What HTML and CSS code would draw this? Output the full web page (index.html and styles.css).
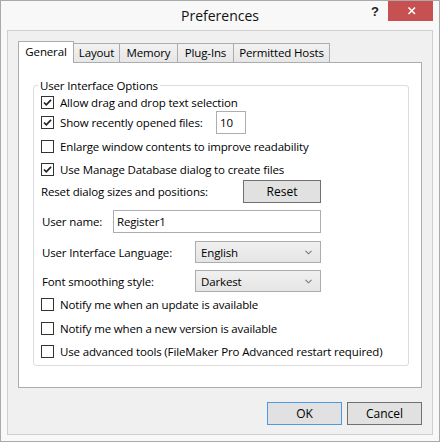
FILE: index.html
```
<!DOCTYPE html>
<html lang="en">
<head>
    <meta charset="UTF-8">
    <title>Preferences</title>
    <link rel="stylesheet" href="styles.css">
</head>
<body>
    <div class="window">
        <div class="titlebar">
            <span></span>
            <div class="title">Preferences</div>
            <div class="caption-btns">
                <span class="help">?</span>
                <span class="close">
                    <svg width="45" height="20" viewBox="0 0 45 20">
                        <path d="M20.5 6.5 L27 13 M27 6.5 L20.5 13" stroke="#fff" stroke-width="1.6" fill="none"/>
                    </svg>
                </span>
            </div>
        </div>

        <div class="client">
            <div class="tabs">
                <div class="tab active tab-general">General</div>
                <div class="tab tab-layout">Layout</div>
                <div class="tab tab-memory">Memory</div>
                <div class="tab tab-plugins">Plug-Ins</div>
                <div class="tab tab-hosts">Permitted Hosts</div>
            </div>

            <div class="panel">
                <fieldset class="group">
                    <legend>User Interface Options</legend>

                    <div class="row r1">
                        <span class="check on"></span>
                        <span>Allow drag and drop text selection</span>
                    </div>
                    <div class="row r2">
                        <span class="check on"></span>
                        <span class="label-files">Show recently opened files:</span>
                        <span class="textbox small">10</span>
                    </div>
                    <div class="row r3">
                        <span class="check"></span>
                        <span>Enlarge window contents to improve readability</span>
                    </div>
                    <div class="row r4">
                        <span class="check on"></span>
                        <span>Use Manage Database dialog to create files</span>
                    </div>
                    <div class="row r5">
                        <span class="label-reset">Reset dialog sizes and positions:</span>
                        <button class="btn reset">Reset</button>
                    </div>
                    <div class="row r6">
                        <span class="label-user">User name:</span>
                        <span class="textbox wide">Register1</span>
                    </div>
                    <div class="row r7">
                        <span class="label-select">User Interface Language:</span>
                        <span class="select">English
                            <svg width="7" height="5" viewBox="0 0 7 5"><path d="M0.5 0.8 L3.5 3.8 L6.5 0.8" stroke="#777" stroke-width="1.1" fill="none"/></svg>
                        </span>
                    </div>
                    <div class="row r8">
                        <span class="label-select">Font smoothing style:</span>
                        <span class="select">Darkest
                            <svg width="7" height="5" viewBox="0 0 7 5"><path d="M0.5 0.8 L3.5 3.8 L6.5 0.8" stroke="#777" stroke-width="1.1" fill="none"/></svg>
                        </span>
                    </div>
                    <div class="row r9">
                        <span class="check"></span>
                        <span>Notify me when an update is available</span>
                    </div>
                    <div class="row r10">
                        <span class="check"></span>
                        <span>Notify me when a new version is available</span>
                    </div>
                    <div class="row r11">
                        <span class="check"></span>
                        <span>Use advanced tools (FileMaker Pro Advanced restart required)</span>
                    </div>
                </fieldset>
            </div>

            <div class="buttons">
                <button class="btn default">OK</button>
                <button class="btn">Cancel</button>
            </div>
        </div>
    </div>
</body>
</html>
```

FILE: styles.css
```
* {
    margin: 0;
    padding: 0;
    box-sizing: border-box;
}

body {
    font-family: 'Open Sans', 'Noto Sans', Arial, sans-serif;
    font-size: 11.5px;
    letter-spacing: -0.15px;
    color: #000;
    background: #fff;
}

.window {
    width: 440px;
    height: 442px;
    border: 1px solid #a9a9a9;
    background: #f8f8f8;
    display: flex;
    flex-direction: column;
}

/* title bar */
.titlebar {
    height: 29px;
    display: grid;
    grid-template-columns: 1fr auto 1fr;
}

.title {
    font-size: 14px;
    letter-spacing: 0;
    line-height: 29px;
    color: #111;
}

.caption-btns {
    justify-self: end;
    display: flex;
    align-items: flex-start;
    margin-right: 6px;
}

.help {
    width: 26px;
    height: 20px;
    display: flex;
    align-items: center;
    justify-content: center;
    font-family: 'Liberation Sans', Arial, sans-serif;
    font-weight: bold;
    font-size: 13px;
    color: #222;
}

.close {
    width: 45px;
    height: 20px;
    background: #c75050;
    display: block;
}

.close svg {
    display: block;
}

/* client area */
.client {
    flex: 1;
    margin: 0 6px 6px 6px;
    border: 1px solid #cfcfcf;
    background: #f0f0f0;
    padding: 10px 10px 9px 10px;
}

.tabs {
    display: flex;
    align-items: flex-end;
    height: 21px;
}

.tab {
    height: 19px;
    border: 1px solid #acacac;
    border-bottom: none;
    background: linear-gradient(#f2f2f2, #e6e6e6);
    text-align: center;
    line-height: 18px;
    margin-left: -1px;
}

.tab.active {
    height: 22px;
    margin-left: 0;
    margin-bottom: -1px;
    background: #fff;
    line-height: 20px;
    position: relative;
    z-index: 1;
}

.tab-general { width: 56px; }
.tab-layout { width: 47px; }
.tab-memory { width: 59px; }
.tab-plugins { width: 57px; }
.tab-hosts { width: 97px; }

.panel {
    height: 326px;
    border: 1px solid #acacac;
    background: #fff;
    padding-top: 15px;
}

.group {
    margin: 0 12px 0 14px;
    border: 1px solid #dcdcdc;
    border-radius: 3px;
    padding: 0 0 2px 0;
}

.group legend {
    margin-left: 4px;
    padding: 0 2px;
    line-height: 15px;
}

.row {
    display: flex;
    align-items: center;
    white-space: nowrap;
    padding-left: 7px;
}

.r1 { height: 18px; }
.r2 { height: 23px; }
.r3 { height: 24px; }
.r4 { height: 22px; }
.r5 { height: 23px; }
.r6 { height: 23px; margin-top: 7px; }
.r7 { height: 22px; margin-top: 8px; }
.r8 { height: 22px; margin-top: 7px; }
.r9 { height: 24px; }
.r10 { height: 24px; }
.r11 { height: 23px; }

.check {
    width: 13px;
    height: 13px;
    border: 1px solid #333;
    background: #fff;
    margin-right: 6px;
    flex: none;
}

.check.on {
    background: #fff url("data:image/svg+xml;utf8,<svg xmlns='http://www.w3.org/2000/svg' width='11' height='11' viewBox='0 0 11 11'><path d='M2 5.5 L4.3 7.8 L9 2.8' stroke='%23222' stroke-width='1.7' fill='none'/></svg>") no-repeat center;
}

.label-files {
    width: 156px;
    flex: none;
}

.label-reset {
    width: 202px;
    flex: none;
}

.label-user {
    width: 72px;
    padding-left: 1px;
    flex: none;
}

.label-select {
    width: 154px;
    padding-left: 1px;
    flex: none;
}

.textbox {
    height: 23px;
    border: 1px solid #abadb3;
    background: #fff;
    padding-left: 3px;
    line-height: 21px;
}

.textbox.small { width: 30px; }
.textbox.wide { width: 208px; }

.select {
    width: 126px;
    height: 22px;
    border: 1px solid #acacac;
    background: linear-gradient(#f0f0f0, #e5e5e5);
    padding: 0 8px 0 5px;
    display: flex;
    align-items: center;
    justify-content: space-between;
}

.btn {
    font-family: inherit;
    font-size: 12px;
    letter-spacing: 0;
    color: #000;
    width: 75px;
    height: 23px;
    border: 1px solid #707070;
    background: #e1e1e1;
}

.btn.reset {
    width: 78px;
}

.btn.default {
    border-color: #4c9ae6;
}

.buttons {
    display: flex;
    justify-content: flex-end;
    gap: 5px;
    margin-top: 14px;
}
```
